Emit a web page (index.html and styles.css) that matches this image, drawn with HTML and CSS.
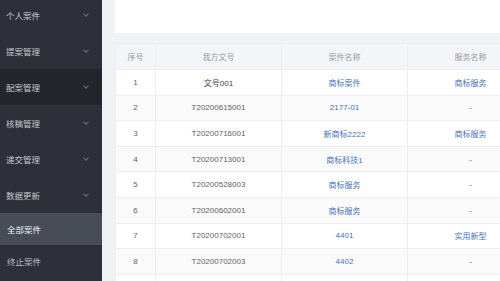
FILE: index.html
```html
<!DOCTYPE html>
<html lang="zh-CN">
<head>
    <meta charset="UTF-8">
    <title>案件管理</title>
    <link rel="stylesheet" href="styles.css">
</head>
<body>
    <div class="layout">
        <aside class="sidebar">
            <div class="menu-item first">个人案件<span class="arrow"></span></div>
            <div class="menu-item">提案管理<span class="arrow"></span></div>
            <div class="menu-item dark">配案管理<span class="arrow"></span></div>
            <div class="menu-item">核稿管理<span class="arrow"></span></div>
            <div class="menu-item">递交管理<span class="arrow"></span></div>
            <div class="menu-item">数据更新<span class="arrow"></span></div>
            <div class="sub-item active">全部案件</div>
            <div class="sub-item">终止案件</div>
        </aside>
        <main class="main">
            <div class="panel"></div>
            <div class="table-box">
                <table class="case-table">
                    <colgroup>
                        <col class="c-no">
                        <col class="c-wide">
                        <col class="c-wide">
                        <col class="c-wide">
                    </colgroup>
                    <thead>
                        <tr><th>序号</th><th>我方文号</th><th>案件名称</th><th>服务名称</th></tr>
                    </thead>
                    <tbody>
                        <tr><td>1</td><td class="dark-text">文号001</td><td class="link">商标案件</td><td class="link">商标服务</td></tr>
                        <tr><td>2</td><td>T20200615001</td><td class="link">2177-01</td><td>-</td></tr>
                        <tr><td>3</td><td>T20200716001</td><td class="link">新商标2222</td><td class="link">商标服务</td></tr>
                        <tr><td>4</td><td>T20200713001</td><td class="link">商标科技1</td><td>-</td></tr>
                        <tr><td>5</td><td>T20200528003</td><td class="link">商标服务</td><td>-</td></tr>
                        <tr><td>6</td><td>T20200602001</td><td class="link">商标服务</td><td>-</td></tr>
                        <tr><td>7</td><td>T20200702001</td><td class="link">4401</td><td class="link">实用新型</td></tr>
                        <tr><td>8</td><td>T20200702003</td><td class="link">4402</td><td>-</td></tr>
                        <tr><td></td><td></td><td></td><td></td></tr>
                    </tbody>
                </table>
            </div>
        </main>
    </div>
</body>
</html>
```
FILE: styles.css
```css
html, body { margin: 0; padding: 0; }
body { font-family: "Liberation Sans", "Noto Sans CJK SC", sans-serif; background: #f0f2f5; width: 500px; height: 281px; overflow: hidden; }
.layout { display: flex; height: 281px; }

.sidebar { width: 102px; flex-shrink: 0; background: #2d3039; display: flex; flex-direction: column; }
.menu-item { height: 36px; flex-shrink: 0; display: flex; align-items: center; justify-content: space-between; padding: 0 14px 0 6px; font-size: 8.5px; color: #c4c8cf; }
.menu-item.first { margin-top: -3px; }
.menu-item.dark { background: #23262d; }
.arrow { width: 3px; height: 3px; border-right: 1px solid #6d727c; border-bottom: 1px solid #6d727c; transform: rotate(45deg); margin-top: -2px; }
.sub-item { height: 32px; flex-shrink: 0; display: flex; align-items: center; padding-left: 7px; font-size: 8.5px; color: #b9bec6; }
.sub-item.active { background: #474c56; color: #eef0f3; }

.main { flex: 1; overflow: hidden; padding-left: 13px; display: flex; flex-direction: column; }
.panel { height: 33px; background: #fff; flex-shrink: 0; }
.table-box { margin-top: 10px; background: #fff; }
.case-table { border-collapse: collapse; table-layout: fixed; width: 418px; font-size: 8px; }
.c-no { width: 40px; }
.c-wide { width: 126px; }
.case-table th, .case-table td { border: 1px solid #ebeef3; text-align: center; padding: 0; }
.case-table th { height: 25px; background: #f3f5f9; color: #979aa1; font-weight: normal; }
.case-table td { height: 24.6px; color: #5f6268; }
.case-table tbody tr:nth-child(even) td { background: #fafafa; }
.case-table td.dark-text { color: #3c3f45; }
.case-table td.link { color: #4672b8; }
```
